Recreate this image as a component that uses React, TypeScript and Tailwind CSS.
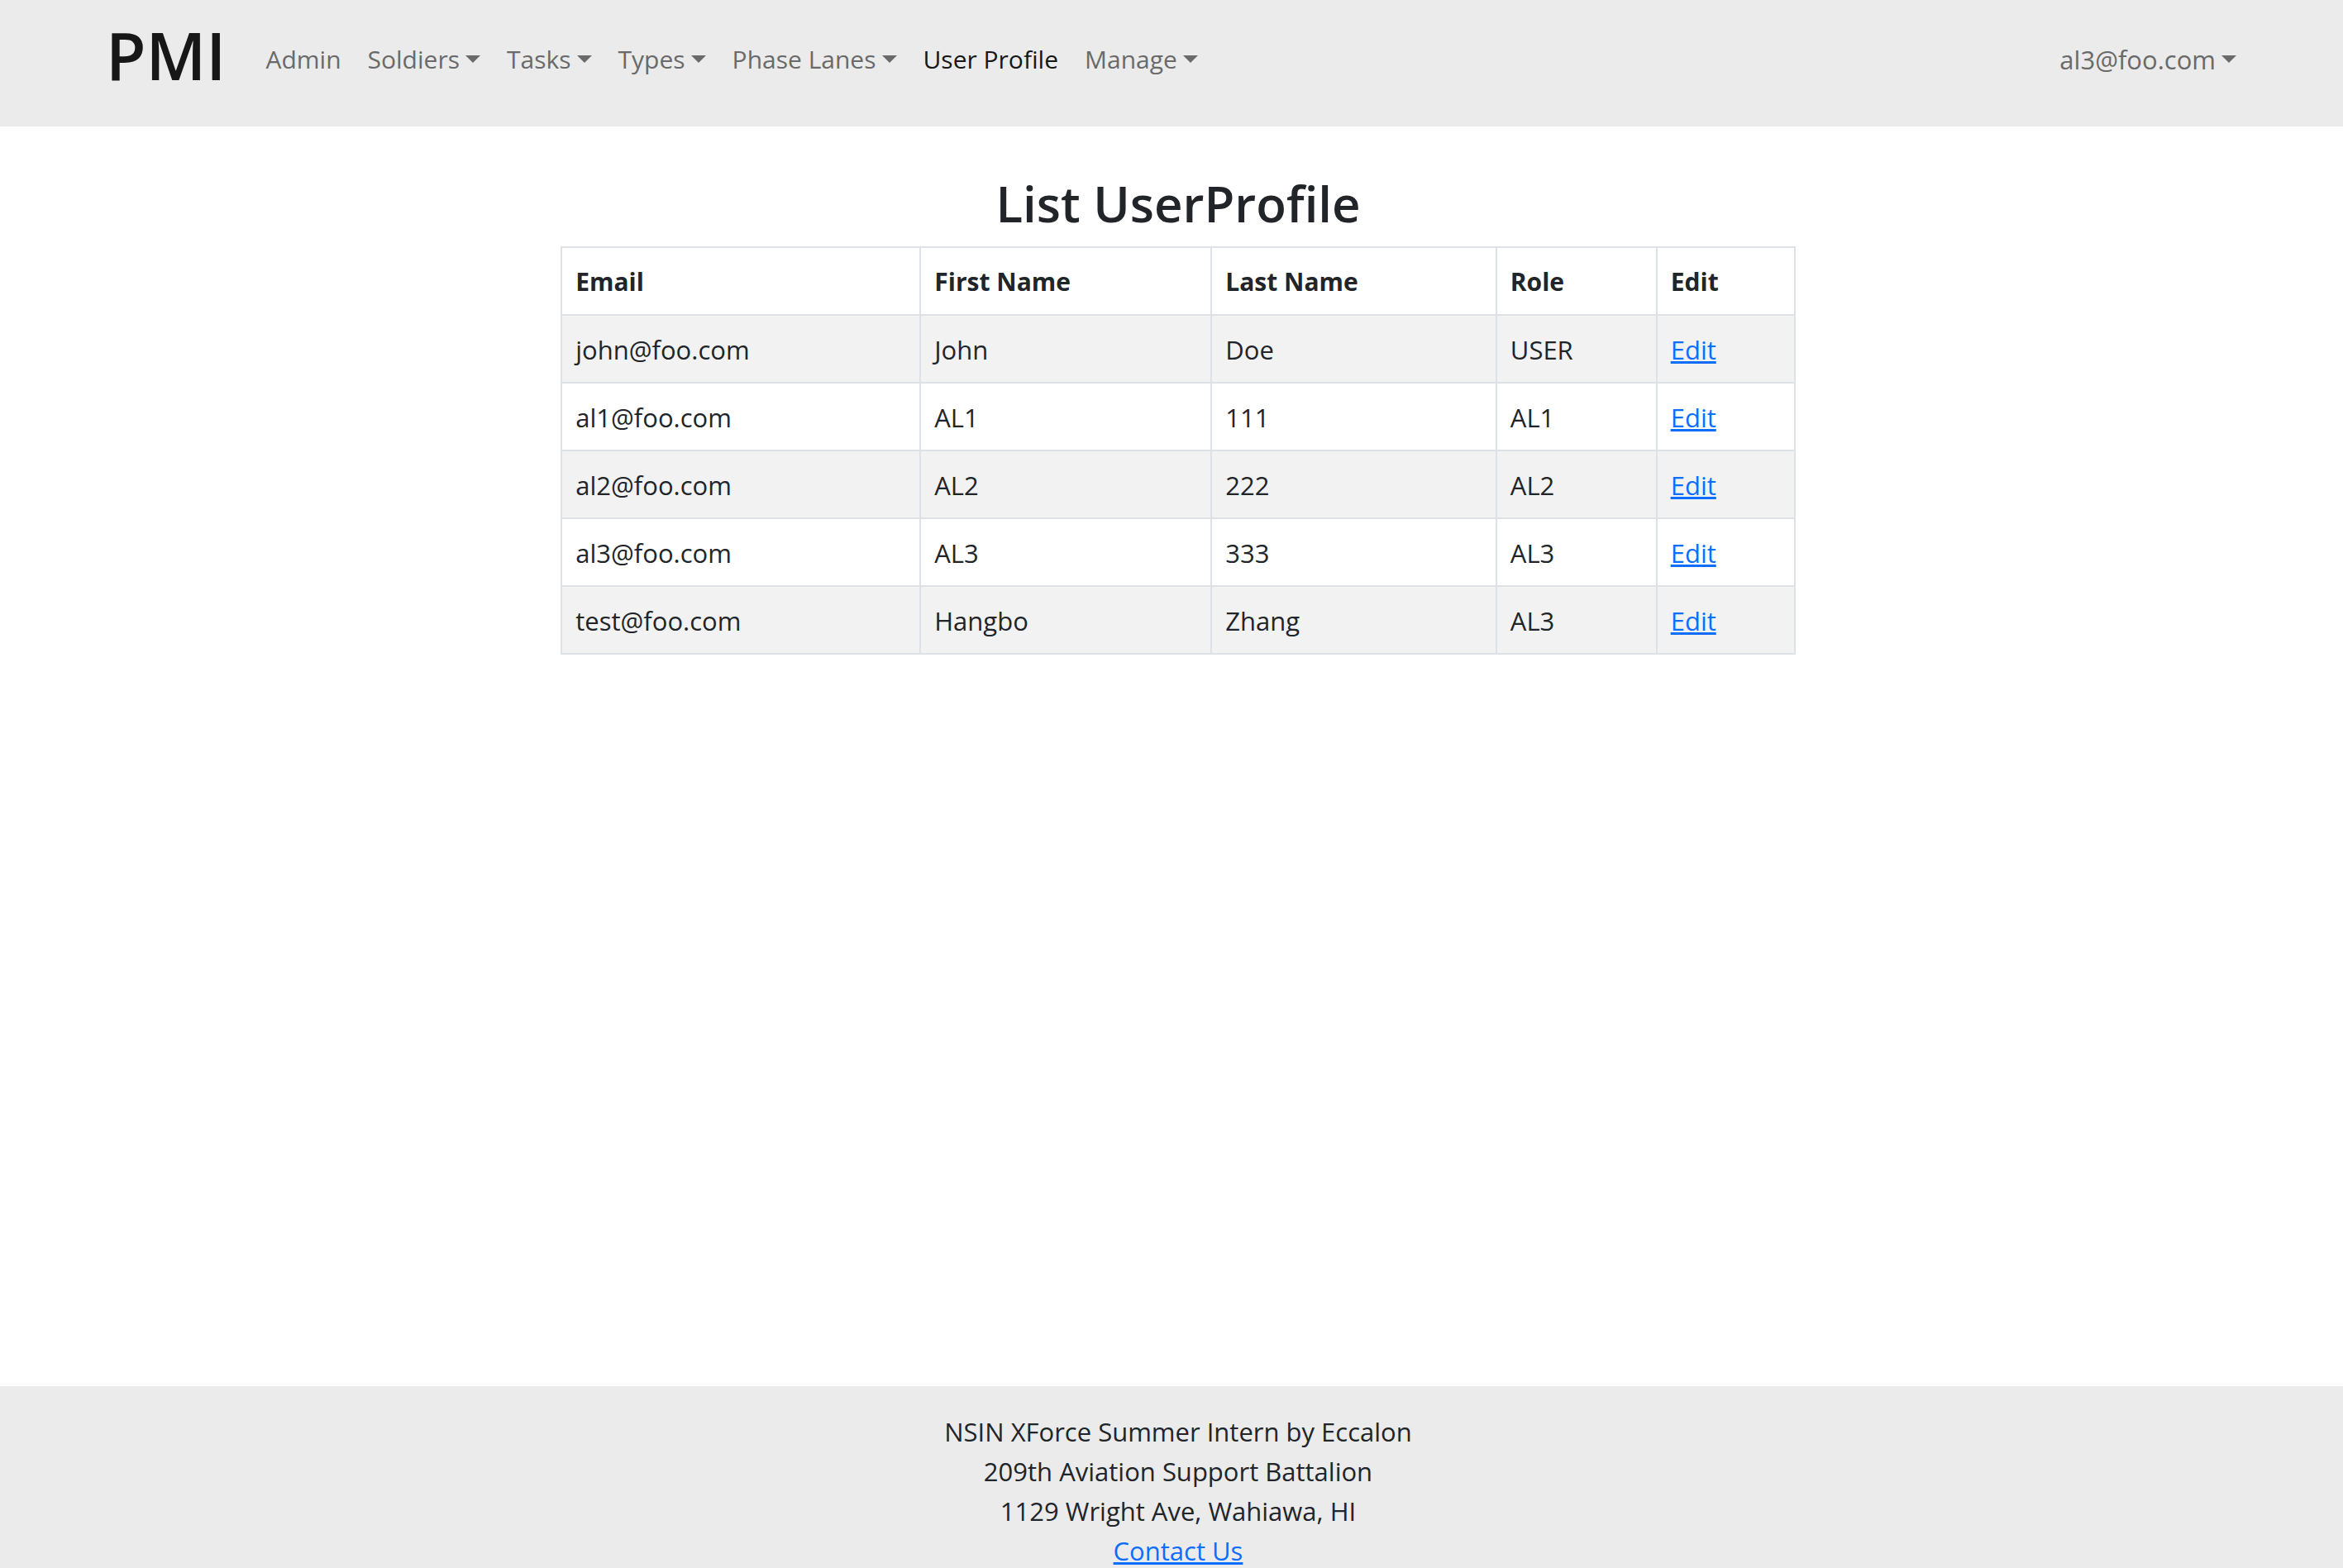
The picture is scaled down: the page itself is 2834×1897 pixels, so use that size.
const navItems = [
  { label: "Admin", menu: false },
  { label: "Soldiers", menu: true },
  { label: "Tasks", menu: true },
  { label: "Types", menu: true },
  { label: "Phase Lanes", menu: true },
  { label: "User Profile", menu: false, active: true },
  { label: "Manage", menu: true },
];

const users = [
  { email: "john@foo.com", first: "John", last: "Doe", role: "USER" },
  { email: "al1@foo.com", first: "AL1", last: "111", role: "AL1" },
  { email: "al2@foo.com", first: "AL2", last: "222", role: "AL2" },
  { email: "al3@foo.com", first: "AL3", last: "333", role: "AL3" },
  { email: "test@foo.com", first: "Hangbo", last: "Zhang", role: "AL3" },
];

const linkClass =
  "text-[#0d6efd] underline decoration-[3px] underline-offset-2 [text-decoration-skip-ink:none]";
const cellClass = "border-2 border-[#dee2e6] px-4 pt-[17px] pb-[15px] text-left";

function Caret() {
  return (
    <svg className="mb-0.5 h-[9px] w-[18px]" viewBox="0 0 18 9" fill="currentColor" aria-hidden="true">
      <path d="M0 0h18L9 9z" />
    </svg>
  );
}

function NavEntry({ label, menu, active }: { label: string; menu: boolean; active?: boolean }) {
  if (menu) {
    return (
      <button type="button" aria-haspopup="menu" className="flex items-center gap-[7px] text-[#6a6a6a]">
        {label}
        <Caret />
      </button>
    );
  }
  return (
    <a
      href="#"
      aria-current={active ? "page" : undefined}
      className={active ? "text-[#171717]" : "text-[#6a6a6a]"}
    >
      {label}
    </a>
  );
}

export default function App() {
  return (
    <div className="flex min-h-screen flex-col bg-white font-['Open_Sans',sans-serif] text-[31px] leading-[48px] text-[#212529]">
      <header className="flex h-[153px] shrink-0 items-start bg-[#ebebeb] pr-[129px] pl-[128px]">
        <a href="#" className="mr-12 pt-[7px] text-[79px] leading-[120px] font-semibold text-[#171717]">
          PMI
        </a>
        <nav className="flex grow items-center gap-8 pt-12 text-[30px]">
          {navItems.map((item) => (
            <NavEntry key={item.label} {...item} />
          ))}
        </nav>
        <div className="pt-12">
          <NavEntry label="al3@foo.com" menu />
        </div>
      </header>

      <main className="flex grow flex-col items-center pt-[55px] pl-4">
        <h1 className="text-[60px] leading-[77px] font-semibold">List UserProfile</h1>
        <table className="mt-[13px] w-[53%] table-fixed border-collapse">
          <colgroup>
            <col className="w-[29.1%]" />
            <col className="w-[23.6%]" />
            <col className="w-[23.1%]" />
            <col className="w-[13%]" />
            <col />
          </colgroup>
          <thead className="text-[30px]">
            <tr>
              {["Email", "First Name", "Last Name", "Role", "Edit"].map((title) => (
                <th key={title} scope="col" className={`${cellClass} font-bold`}>
                  {title}
                </th>
              ))}
            </tr>
          </thead>
          <tbody>
            {users.map((user) => (
              <tr key={user.email} className="odd:bg-[#f2f2f2]">
                <td className={cellClass}>{user.email}</td>
                <td className={cellClass}>{user.first}</td>
                <td className={cellClass}>{user.last}</td>
                <td className={cellClass}>{user.role}</td>
                <td className={cellClass}>
                  <a href="#" className={linkClass}>
                    Edit
                  </a>
                </td>
              </tr>
            ))}
          </tbody>
        </table>
      </main>

      <footer className="h-[220px] shrink-0 overflow-hidden bg-[#ebebeb] pt-[31px] pl-4 text-center">
        <p>NSIN XForce Summer Intern by Eccalon</p>
        <p>209th Aviation Support Battalion</p>
        <p>1129 Wright Ave, Wahiawa, HI</p>
        <a href="#" className={linkClass}>
          Contact Us
        </a>
      </footer>
    </div>
  );
}
